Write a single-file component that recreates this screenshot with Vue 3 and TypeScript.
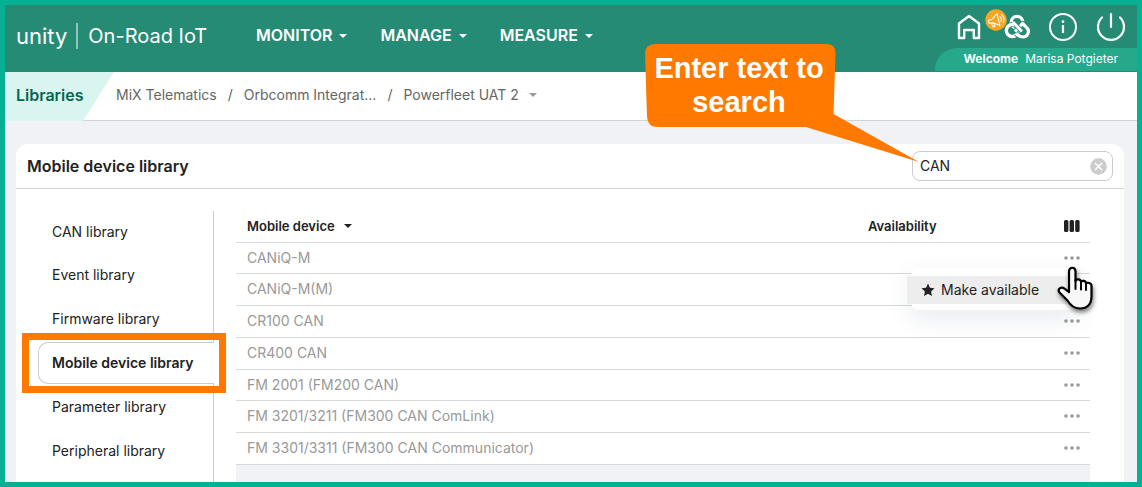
<script setup lang="ts">
import { ref } from 'vue'

interface LibraryItem {
  name: string
  active?: boolean
}

const mainMenu: string[] = ['MONITOR', 'MANAGE', 'MEASURE']
const libraries: LibraryItem[] = [
  { name: 'CAN library' },
  { name: 'Event library' },
  { name: 'Firmware library' },
  { name: 'Mobile device library', active: true },
  { name: 'Parameter library' },
  { name: 'Peripheral library' },
]
const devices: string[] = [
  'CANiQ-M',
  'CANiQ-M(M)',
  'CR100 CAN',
  'CR400 CAN',
  'FM 2001 (FM200 CAN)',
  'FM 3201/3211 (FM300 CAN ComLink)',
  'FM 3301/3311 (FM300 CAN Communicator)',
]
const search = ref('CAN')
const openRow = ref(0)
</script>

<template>
  <div class="page">
    <header class="topbar">
      <a class="brand" href="#">
        <span class="logo">unity</span>
        <span class="product">On-Road IoT</span>
      </a>
      <nav class="menu" aria-label="Main">
        <button v-for="m in mainMenu" :key="m" type="button">{{ m }}<i class="caret"></i></button>
      </nav>
      <div class="tools">
        <div class="icons">
          <a class="home" href="#" aria-label="Home">
            <svg width="24" height="26" viewBox="0 0 24 26"><path d="M2 9.500 12 2l10 7.500V24h-5.200v-8H7.200v8H2Z" fill="none" stroke="#fff" stroke-width="2.400" stroke-linejoin="round" /></svg>
          </a>
          <a class="apps" href="#" aria-label="Applications">
            <svg width="26" height="26" viewBox="0 0 26 26" fill="none">
              <circle cx="13" cy="8.200" r="5.800" stroke="#fff" stroke-width="3.400" />
              <circle cx="8.300" cy="16.500" r="6" stroke="#268b74" stroke-width="5" />
              <circle cx="8.300" cy="16.500" r="6" stroke="#fff" stroke-width="3.400" />
              <path d="M11 17.500 18.500 9.500l4.300 4.200a5.500 5.500 0 0 1-3.800 9.300c-3 0-4.500-1-7-3.500" stroke="#268b74" stroke-width="5" stroke-linejoin="round" />
              <path d="M11 17.500 18.500 9.500l4.300 4.200a5.500 5.500 0 0 1-3.800 9.300c-3 0-4.500-1-7-3.500" stroke="#fff" stroke-width="3.200" stroke-linejoin="round" />
              <path d="M11.500 10.500l6 6.500" stroke="#268b74" stroke-width="4.600" />
              <path d="M9 8l9 9.500" stroke="#fff" stroke-width="2.800" />
            </svg>
            <svg class="news" width="22" height="22" viewBox="0 0 22 22" fill="none">
              <circle cx="11" cy="11" r="10.700" fill="#f5a623" />
              <g transform="rotate(-14 11 11)" stroke="#fff" stroke-width="1" stroke-linejoin="round" stroke-linecap="round">
                <path d="M3.500 9.500h3.500L13.500 5v12L7 12.800H3.500ZM5.500 13l1 4h2.200l-1-3.800M15.500 8.500c1.200 1.500 1.200 3.500 0 5M17.500 6.800c2 2.500 2 6 0 8.400" />
              </g>
            </svg>
          </a>
          <a href="#" aria-label="Information">
            <svg width="30" height="30" viewBox="0 0 30 30"><circle cx="15" cy="15" r="13" fill="none" stroke="#fff" stroke-width="2" /><path d="M15 13v8" stroke="#fff" stroke-width="2.200" /><circle cx="15" cy="9.700" r="1.400" fill="#fff" /></svg>
          </a>
          <a href="#" aria-label="Log out">
            <svg width="30" height="30" viewBox="0 0 30 30" fill="none" stroke="#fff" stroke-width="2.200" stroke-linecap="round"><path d="M6 5.500a13 13 0 1 0 18 0M15 2v13" /></svg>
          </a>
        </div>
        <div class="welcome"><b>Welcome</b><span>Marisa Potgieter</span></div>
      </div>
    </header>

    <nav class="crumbs" aria-label="Breadcrumb">
      <span class="section">Libraries</span>
      <div class="trail">
        <a href="#">MiX Telematics</a><span>/</span>
        <a href="#">Orbcomm Integrat...</a><span>/</span>
        <button type="button">Powerfleet UAT 2<i class="caret"></i></button>
      </div>
    </nav>

    <main class="card">
      <div class="card-head">
        <h1>Mobile device library</h1>
        <div class="search">
          <input v-model="search" type="text" aria-label="Search mobile devices" />
          <button type="button" aria-label="Clear search" @click="search = ''">
            <svg width="17" height="17" viewBox="0 0 17 17"><circle cx="8.500" cy="8.500" r="8.300" fill="#ccc" /><path d="m5 5 7 7m0-7-7 7" stroke="#fff" stroke-width="1.600" /></svg>
          </button>
          <div class="callout">
            <svg width="275" height="119" viewBox="0 0 275 119"><path d="M10 0H181Q191 0 190.500 10L188.500 70 274 118 161 83H13Q2.500 83 2 73L0 10Q0 0 10 0Z" fill="#ff7800" /></svg>
            <p>Enter text to search</p>
          </div>
        </div>
      </div>
      <div class="card-body">
        <ul class="side">
          <li v-for="l in libraries" :key="l.name" :class="{ active: l.active }">
            <a href="#">{{ l.name }}</a>
            <span v-if="l.active" class="marker"></span>
          </li>
        </ul>
        <div class="grid">
          <table>
            <thead>
              <tr>
                <th class="name"><button type="button">Mobile device<i class="caret"></i></button></th>
                <th>Availability</th>
                <th class="act">
                  <button type="button" aria-label="Choose columns">
                    <svg width="16" height="12" viewBox="0 0 16 12" fill="#222"><rect width="4.400" height="12" rx="1.500" /><rect x="5.600" width="4.400" height="12" rx="1.500" /><rect x="11.200" width="4.400" height="12" rx="1.500" /></svg>
                  </button>
                </th>
              </tr>
            </thead>
            <tbody>
              <tr v-for="(d, i) in devices" :key="d">
                <td class="name">{{ d }}</td>
                <td></td>
                <td class="act">
                  <button type="button" :aria-label="'Actions for ' + d" @click="openRow = i">
                    <svg width="16" height="4" viewBox="0 0 16 4" fill="#999"><circle cx="2" cy="2" r="1.800" /><circle cx="8" cy="2" r="1.800" /><circle cx="14" cy="2" r="1.800" /></svg>
                  </button>
                  <div v-if="openRow === i" class="popup">
                    <button type="button">
                      <svg width="14" height="14" viewBox="0 0 14 14"><path d="m7 .5 1.900 4.300 4.600.5-3.400 3.100.9 4.600L7 10.700 3 13l.9-4.600L.5 5.300l4.600-.5Z" fill="#222" /></svg>
                      Make available
                    </button>
                    <svg class="hand" width="40" height="48" viewBox="0 0 40 48"><path d="M13 27V6.500C13 1.500 19.500 1.500 19.500 6.500V16c1-2.500 5.500-2 5.500 1 1-2 5-1.500 5 1.500 1.500-1.500 5.500-.5 5.500 2.500v10c0 8-4.500 12.500-11.500 12.500-6 0-9.500-3-12.500-8L3.500 27.500c-2.500-3.500 1.500-6.500 5-3.800Z" fill="#f8f8f8" stroke="#000" stroke-width="2.200" stroke-linejoin="round" /><path d="M19.500 15v9M25 17v7.500M30 18.500V25" stroke="#000" stroke-width="2" stroke-linecap="round" /></svg>
                  </div>
                </td>
              </tr>
            </tbody>
          </table>
        </div>
      </div>
    </main>
  </div>
</template>

<style>
body { margin: 0; }
</style>

<style scoped>
* { box-sizing: border-box; }
.page {
  min-height: 100vh;
  display: flex;
  flex-direction: column;
  border: 5px solid #06b092;
  background: #f1f2f6;
  font: 14px/20px Inter, "Liberation Sans", sans-serif;
  color: #222;
}
a { color: inherit; text-decoration: none; }
button { border: 0; padding: 0; background: none; font: inherit; color: inherit; cursor: pointer; }
svg { display: block; }
.caret {
  display: inline-block;
  border: 4px solid transparent;
  border-top-color: currentColor;
  border-bottom: 0;
  vertical-align: 3px;
}
.topbar { display: flex; height: 67px; background: #268b74; color: #fff; }
.brand { display: flex; align-items: center; height: 62px; padding-left: 11px; width: 251px; }
.logo { font: 400 22px/26px Inter, sans-serif; padding-right: 9px; border-right: 2px solid #8fc4b7; }
.product { font-size: 20px; padding-left: 10px; }
.menu { display: flex; height: 60px; align-items: center; gap: 33px; font-size: 16px; font-weight: 600; }
.menu .caret { margin-left: 7px; }
.tools { margin-left: auto; display: flex; flex-direction: column; align-items: flex-end; }
.icons { display: flex; align-items: center; height: 43px; gap: 18px; padding-right: 11px; }
.home { margin-right: 5px; }
.apps { position: relative; }
.news { position: absolute; left: -19px; top: -5px; }
.welcome {
  display: flex;
  gap: 7px;
  height: 23px;
  padding: 0 19px 0 28px;
  border-radius: 22px 0 0 0;
  background: #26a98b;
  font-size: 12px;
  line-height: 22px;
}
.crumbs { display: flex; height: 49px; background: #fff; border-bottom: 1px solid #d3d3d3; color: #666; }
.section {
  width: 109px;
  height: 49px;
  padding-left: 11px;
  background: #d9f5ef;
  clip-path: polygon(0 0, 100% 0, 78px 100%, 0 100%);
  font-size: 16px;
  font-weight: 600;
  line-height: 46px;
  color: #05664f;
}
.trail { display: flex; align-items: center; gap: 11px; padding: 0 0 2px 2px; }
.trail .caret { margin-left: 10px; color: #999; }
.card {
  flex: 1;
  display: flex;
  flex-direction: column;
  margin: 23px 13px 0 11px;
  border-radius: 12px 12px 0 0;
  background: #fff;
}
.card-head {
  display: flex;
  align-items: center;
  justify-content: space-between;
  height: 45px;
  padding: 0 11px;
  border-bottom: 1px solid #d3d3d3;
}
h1 { margin: 0; font-size: 16px; font-weight: 600; }
.search { position: relative; display: flex; align-items: center; width: 201px; height: 30px; border: 1px solid #ccc; border-radius: 8px; padding: 0 5px 0 7px; }
.search input { flex: 1; min-width: 0; border: 0; padding: 0; outline: 0; background: none; font: inherit; color: #222; }
.callout { position: absolute; left: -268px; top: -108px; width: 275px; pointer-events: none; }
.callout p {
  position: absolute;
  top: 7px;
  left: 0;
  width: 188px;
  margin: 0;
  text-align: center;
  font: 700 29px/34px "Liberation Sans", Arial, sans-serif;
  color: #fff;
}
.card-body { flex: 1; display: flex; }
.side { width: 198px; margin: 22px 22px 0 0; padding: 0 0 7px 22px; list-style: none; border-right: 1px solid #ccc; }
.side li { position: relative; height: 44px; padding-left: 14px; line-height: 42px; }
.side li:first-child { height: 43px; }
.side .active {
  height: 42px;
  margin: 0 -1px 2px 0;
  padding-left: 13px;
  border: 1px solid #ccc;
  border-right: 0;
  border-radius: 10px 0 0 10px;
  background: #fff;
  font-weight: 600;
  line-height: 40px;
}
.marker { position: absolute; inset: -10px -12px -10px -17px; border: 7px solid #ff7800; }
.grid { flex: 1; margin-right: 34px; background: #f1f2f6; }
table { width: 100%; border-collapse: collapse; background: #fff; table-layout: fixed; }
th, td { padding: 0; text-align: left; border-bottom: 1px solid #d9d9d9; }
th { height: 53px; padding-top: 21px; font-size: 13px; font-weight: 600; }
td { height: 32px; color: #999; }
tbody tr:nth-child(4n + 1) td { height: 31px; }
.name { padding-left: 11px; width: 74%; }
th .caret { margin-left: 9px; }
.act { position: relative; width: 36px; padding-left: 10px; }
.act > button { display: block; }
.popup {
  position: absolute;
  z-index: 2;
  top: 25px;
  right: 12px;
  width: 167px;
  padding: 8px 0 6px;
  border-radius: 8px;
  background: #fff;
  box-shadow: 0 8px 24px rgba(60, 80, 110, 0.12);
  color: #222;
}
.popup button { display: flex; align-items: center; gap: 6px; width: 160px; height: 28px; margin-left: -4px; padding-left: 14px; background: #ededed; }
.hand { position: absolute; top: -3px; right: -18px; filter: drop-shadow(1px 3px 2px rgba(0, 0, 0, 0.5)); }
</style>
